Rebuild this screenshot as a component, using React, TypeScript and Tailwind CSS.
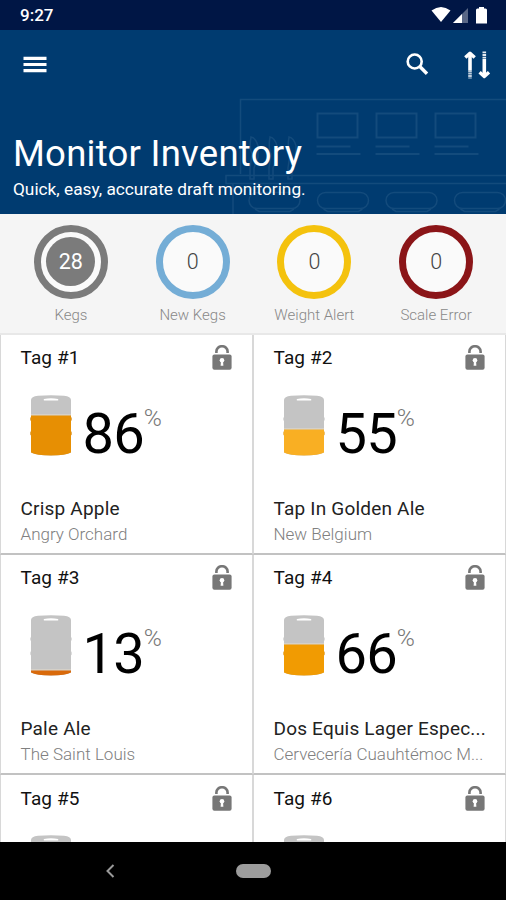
type Stat = {
  label: string;
  value: number;
  ring: string;
  active?: boolean;
};

type Tag = {
  id: number;
  // y where the liquid starts inside the 61px tall keg
  fillTop: number;
  color: string;
  percent?: number;
  beer?: string;
  brewery?: string;
};

const stats: Stat[] = [
  { label: "Kegs", value: 28, ring: "border-[#7b7b7b]", active: true },
  { label: "New Kegs", value: 0, ring: "border-[#74add6]" },
  { label: "Weight Alert", value: 0, ring: "border-[#f4c20d]" },
  { label: "Scale Error", value: 0, ring: "border-[#8b1518]" },
];

const tags: Tag[] = [
  { id: 1, percent: 86, fillTop: 20.5, color: "#e78f03", beer: "Crisp Apple", brewery: "Angry Orchard" },
  { id: 2, percent: 55, fillTop: 34.5, color: "#f9af23", beer: "Tap In Golden Ale", brewery: "New Belgium" },
  { id: 3, percent: 13, fillTop: 55.5, color: "#d96a0b", beer: "Pale Ale", brewery: "The Saint Louis" },
  { id: 4, percent: 66, fillTop: 29.5, color: "#f19b02", beer: "Dos Equis Lager Espec...", brewery: "Cervecería Cuauhtémoc M..." },
  { id: 5, fillTop: 27, color: "#f19b02" },
  { id: 6, fillTop: 37, color: "#f9af23" },
];

function StatusBar() {
  return (
    <div className="flex h-[30px] shrink-0 items-center justify-between bg-[#001645] pr-[17px] pl-5 text-white">
      <span className="pt-px text-[17px] font-medium">9:27</span>
      <svg width="58" height="18" viewBox="0 0 58 18" fill="#fff">
        <path d="M0.500 4.500Q10 -2.500 19.500 4.500L10 16Z" />
        <path d="M22 17L37 2V17Z" opacity=".35" />
        <path d="M22 17L31 8V17Z" />
        <path d="M45 4Q45 2.500 46.500 2.500H48V1H53V2.500H54.500Q56 2.500 56 4V17.500H45Z" />
      </svg>
    </div>
  );
}

// Faint line art of a bar counter behind the title
function BarArt() {
  return (
    <svg
      className="absolute right-0 bottom-0"
      width="284"
      height="118"
      viewBox="222 96 284 118"
      fill="none"
      stroke="#134b7c"
      strokeWidth="1.500"
    >
      <path d="M506 99.500H240.500V174" />
      <path d="M506 175.500H226V183.500H506" />
      <path d="M233 184V214" />
      {[317.5, 376.5, 435.5].map((x) => (
        <g key={x}>
          <rect x={x} y="113.500" width="40" height="24" strokeWidth="2" />
          <path d={`M${x - 1} 146.500H${x + 33}M${x - 1} 154H${x + 43}`} strokeWidth="2" />
        </g>
      ))}
      {[249, 317.5, 386, 454.5].map((x) => (
        <g key={x}>
          <rect x={x} y="192.500" width="51" height="16" rx="8" />
          <path d={`M${x + 6} 209L${x + 10} 211.500H${x + 41}L${x + 45} 209`} />
        </g>
      ))}
      {/* tap handles */}
      {[251, 270, 289].map((x) => (
        <path
          key={x}
          d={`M${x} 137Q${x + 5} 138 ${x + 7} 146L${x + 7} 157L${x + 3} 168V179H${x - 1}V168L${x + 1} 154Q${x - 2} 148 ${x} 137Z`}
        />
      ))}
    </svg>
  );
}

function Header() {
  return (
    <header className="relative h-[184px] shrink-0 bg-[#003b70] text-white">
      <BarArt />
      <div className="relative flex h-[70px] items-center justify-between pr-[15px] pl-[23px]">
        <svg width="24" height="18" viewBox="0 0 24 18" fill="#fff">
          <path d="M0.500 0.700H23.500V3.900H0.500ZM0.500 6.900H23.500V10.100H0.500ZM0.500 13.100H23.500V16.300H0.500Z" />
        </svg>
        <div className="flex items-center gap-[34px]">
          <svg width="24" height="24" viewBox="0 0 24 24" fill="none" stroke="#fff" strokeWidth="2.600">
            <circle cx="9.700" cy="8.500" r="7" />
            <path d="M14.800 13.500L22 20.800" strokeWidth="3.400" />
          </svg>
          <svg width="28" height="28" viewBox="0 0 28 28" fill="none" stroke="#fff" strokeWidth="3.600">
            <path d="M7 19V4" />
            <path d="M2.300 6.500L7 2.300L11.700 6.500" strokeWidth="3.400" strokeLinejoin="round" />
            <path d="M7 19V27.500" strokeDasharray="2 0.500" opacity=".75" />
            <path d="M21.300 8V24" />
            <path d="M16.600 21.200L21.300 25.400L26 21.200" strokeWidth="3.400" strokeLinejoin="round" />
            <path d="M21.300 0.500V7.500" strokeDasharray="1.800 0.800" opacity=".9" />
          </svg>
        </div>
      </div>
      <div className="relative px-[13px] pt-[33px]">
        <h1 className="text-[36.5px] leading-[42px] tracking-[0.25px]">Monitor Inventory</h1>
        <p className="mt-1 text-[17.25px] leading-5">Quick, easy, accurate draft monitoring.</p>
      </div>
    </header>
  );
}

function StatCircle({ stat }: { stat: Stat }) {
  return (
    <div className="flex flex-col items-center">
      <div
        className={`flex h-[74px] w-[74px] items-center justify-center rounded-full border-[7px] bg-[#fafafa] ${stat.ring}`}
      >
        {stat.active ? (
          <span className="flex h-[49px] w-[49px] items-center justify-center rounded-full bg-[#7b7b7b] pt-[2px] text-[21.5px] text-white">
            {stat.value}
          </span>
        ) : (
          <span className="pt-[2px] text-[21.5px] font-light text-[#444]">{stat.value}</span>
        )}
      </div>
      <span className="mt-1.5 text-[15px] leading-5 font-light text-[#888]">{stat.label}</span>
    </div>
  );
}

function LockIcon() {
  return (
    <svg width="20" height="25" viewBox="0 0 20 25">
      <path d="M4.400 8V6.500A5.600 5.300 0 0 1 15.600 6.500V8" fill="none" stroke="#777" strokeWidth="2.600" />
      <rect x="0.400" y="9.500" width="19.200" height="15.300" rx="2" fill="#777" />
      <circle cx="10" cy="15.300" r="2.300" fill="#fff" />
      <path d="M9 16H11L11.400 20.800H8.600Z" fill="#fff" />
    </svg>
  );
}

function Keg({ tag }: { tag: Tag }) {
  const clip = `keg-${tag.id}`;
  return (
    <svg width="42" height="61" viewBox="0 0 42 61">
      <clipPath id={clip}>
        <path d="M1 5Q1 1.500 8 0.800Q21 -0.500 34 0.800Q41 1.500 41 5V22L41.600 23V25L41 26V36L41.600 37.500V39.500L41 40.500V57.500Q36 60.500 21 60.500Q6 60.500 1 57.500V40.500L0.400 39.500V37.500L1 36V26L0.400 25V23L1 22Z" />
      </clipPath>
      <g clipPath={`url(#${clip})`}>
        <rect width="42" height="61" fill="#c4c4c4" />
        <rect y={tag.fillTop - 1} width="42" height="1" fill="#e6dccb" />
        <rect y={tag.fillTop} width="42" height="61" fill={tag.color} />
      </g>
      <path d="M14 4Q21 2.600 28 4Q29 5.500 27 5.500H15Q13 5.500 14 4Z" fill="#fff" />
    </svg>
  );
}

function TagCard({ tag }: { tag: Tag }) {
  return (
    <div className="h-[220.3px] border-x border-b-2 border-x-[#d8d8d8] border-b-[#c2c2c2] bg-white pr-[20.5px] pl-[19.5px] whitespace-nowrap">
      <div className="flex h-9 items-start justify-between pt-[10.5px]">
        <span className="pt-px text-[19px] leading-6 tracking-[0.1px] text-[#111]">Tag #{tag.id}</span>
        <LockIcon />
      </div>
      <div className="mt-6 flex h-[61px] pl-[9.5px]">
        <Keg tag={tag} />
        {tag.percent !== undefined && (
          <>
            <span className="ml-[10.5px] pt-2 text-[56px] leading-[62px] tracking-[-0.8px] text-black">{tag.percent}</span>
            <span className="pt-[10px] text-[24.5px] leading-[26px] font-light tracking-tight text-[#777]">%</span>
          </>
        )}
      </div>
      {tag.beer && (
        <>
          <p className="mt-[41px] text-[19px] leading-6 tracking-[0.2px] text-[#222]">{tag.beer}</p>
          <p className="mt-px text-[17px] leading-6 font-light text-[#808080]">{tag.brewery}</p>
        </>
      )}
    </div>
  );
}

function NavBar() {
  return (
    <nav className="grid h-[58px] shrink-0 grid-cols-[220px_67px_1fr] items-center justify-items-center bg-black">
      <svg width="10" height="14" viewBox="0 0 10 14" fill="none" stroke="#9a9a9a" strokeWidth="2">
        <path d="M8.500 1L2.500 7L8.500 13" />
      </svg>
      <span className="h-[14px] w-[35px] rounded-full bg-[#9c9c9c]" />
    </nav>
  );
}

export default function App() {
  return (
    <div className="flex h-[900px] w-[506px] flex-col overflow-hidden bg-white font-['Roboto',sans-serif]">
      <StatusBar />
      <Header />
      <section className="grid h-[118.6px] shrink-0 grid-cols-4 bg-[#f5f5f5] pt-[10.5px] pr-[9px] pl-[10px]">
        {stats.map((stat) => (
          <StatCircle key={stat.label} stat={stat} />
        ))}
      </section>
      <main className="min-h-0 flex-1 overflow-hidden border-t-2 border-t-[#e8e8e8]">
        <div className="grid grid-cols-2">
          {tags.map((tag) => (
            <TagCard key={tag.id} tag={tag} />
          ))}
        </div>
      </main>
      <NavBar />
    </div>
  );
}
